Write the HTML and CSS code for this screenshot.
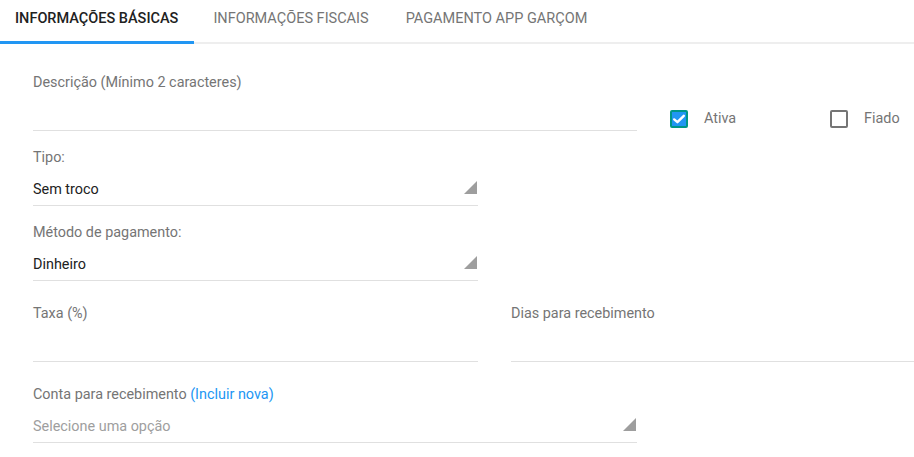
FILE: index.html
```html
<!DOCTYPE html>
<html lang="pt-BR">
<head>
    <meta charset="UTF-8">
    <meta name="viewport" content="width=device-width, initial-scale=1.0">
    <title>Forma de pagamento</title>
    <link rel="stylesheet" href="styles.css">
</head>
<body>
    <div class="tabs">
        <div class="tab active">Informações básicas</div>
        <div class="tab">Informações fiscais</div>
        <div class="tab">Pagamento app garçom</div>
    </div>

    <div class="form">
        <div class="row">
            <div class="field field-wide">
                <label>Descrição (Mínimo 2 caracteres)</label>
                <div class="input"></div>
            </div>
            <div class="checks">
                <div class="check">
                    <span class="box checked">
                        <svg viewBox="0 0 14 14" width="14" height="14"><path d="M2.2 7.4 L5.4 10.2 L11.8 3.8" fill="none" stroke="#fff" stroke-width="2.4" stroke-linecap="round" stroke-linejoin="round"/></svg>
                    </span>
                    Ativa
                </div>
                <div class="check">
                    <span class="box"></span>
                    Fiado
                </div>
            </div>
        </div>

        <div class="row">
            <div class="field">
                <label>Tipo:</label>
                <div class="input select">Sem troco</div>
            </div>
        </div>

        <div class="row">
            <div class="field">
                <label>Método de pagamento:</label>
                <div class="input select">Dinheiro</div>
            </div>
        </div>

        <div class="row">
            <div class="field">
                <label>Taxa (%)</label>
                <div class="input"></div>
            </div>
            <div class="field field-right">
                <label>Dias para recebimento</label>
                <div class="input"></div>
            </div>
        </div>

        <div class="row">
            <div class="field field-wide">
                <label>Conta para recebimento <a href="#" class="link">(Incluir nova)</a></label>
                <div class="input select placeholder">Selecione uma opção</div>
            </div>
        </div>
    </div>
</body>
</html>
```

FILE: styles.css
```css
body {
    margin: 0;
    font-family: Roboto, "Liberation Sans", sans-serif;
    font-size: 14.4px;
    color: #212121;
    background-color: #fff;
    overflow: hidden;
}
.tabs {
    display: flex;
    height: 42px;
    border-bottom: 2px solid #eeeeee;
}
.tab {
    position: relative;
    padding: 0 18px 0 19px;
    line-height: 38px;
    font-size: 14.5px;
    text-transform: uppercase;
    color: #757575;
}
.tab.active {
    padding: 0 16px 0 15px;
    color: #212121;
    font-weight: 500;
}
.tab.active::after {
    content: "";
    position: absolute;
    left: 0;
    right: 0;
    bottom: -2px;
    height: 3px;
    background-color: #2196f3;
}
.form {
    padding: 29px 0 0 33px;
}
.row {
    display: flex;
    margin-bottom: 17px;
}
.row:nth-child(3),
.row:nth-child(4) {
    margin-bottom: 23px;
}
.field {
    flex-shrink: 0;
    width: 445px;
}
.field-wide {
    width: 604px;
}
.field-right {
    width: 403px;
    margin-left: 33px;
}
.field label {
    display: block;
    color: #757575;
    line-height: 20px;
}
.link {
    color: #2196f3;
    text-decoration: none;
}
.input {
    position: relative;
    height: 25px;
    padding-top: 12px;
    line-height: 20px;
    border-bottom: 1px solid #e0e0e0;
}
.select::after {
    content: "";
    position: absolute;
    right: 1px;
    top: 13px;
    width: 0;
    height: 0;
    border-left: 13px solid transparent;
    border-bottom: 13px solid #9e9e9e;
}
.placeholder {
    color: #9e9e9e;
}
.checks {
    display: flex;
    align-items: center;
    align-self: flex-start;
    margin-left: 33px;
    padding-top: 36px;
}
.check {
    display: flex;
    align-items: center;
    width: 160px;
    line-height: 20px;
    color: #757575;
}
.check:last-child {
    width: auto;
}
.box {
    width: 18px;
    height: 18px;
    box-sizing: border-box;
    border: 2px solid #757575;
    border-radius: 2px;
    margin-right: 16px;
}
.box.checked {
    border-color: #009688;
    background-color: #2196f3;
    display: flex;
    align-items: center;
    justify-content: center;
}
```
